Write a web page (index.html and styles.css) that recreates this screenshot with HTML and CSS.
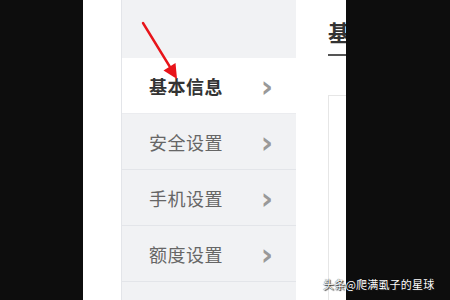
FILE: index.html
```html
<!DOCTYPE html>
<html lang="zh">
<head>
<meta charset="utf-8">
<link rel="stylesheet" href="styles.css">
</head>
<body>
<div class="stage">
  <div class="side-black"></div>
  <div class="panel">
    <nav class="sidebar">
      <div class="sidebar-top"></div>
      <div class="item active"><span class="label">基本信息</span><span class="chev">&#x203A;</span></div>
      <div class="item"><span class="label">安全设置</span><span class="chev">&#x203A;</span></div>
      <div class="item"><span class="label">手机设置</span><span class="chev">&#x203A;</span></div>
      <div class="item"><span class="label">额度设置</span><span class="chev">&#x203A;</span></div>
      <div class="item"></div>
    </nav>
    <main class="content">
      <h1 class="title">基本信息</h1>
      <div class="box"></div>
    </main>
  </div>
  <div class="right-black"></div>
  <svg class="arrow" width="60" height="80" viewBox="0 0 60 80">
    <line x1="3" y1="2" x2="30" y2="46" stroke="#e8141a" stroke-width="2.4" stroke-linecap="round"/>
    <polygon points="37,58 35.5,42 23.5,49.5" fill="#e8141a"/>
  </svg>
  <div class="watermark">头条@爬满虱子的星球</div>
</div>
</body>
</html>
```
FILE: styles.css
```css
html, body {
  margin: 0;
  padding: 0;
  background: #0d0d0d;
}
.stage {
  position: relative;
  width: 450px;
  height: 300px;
  display: flex;
  overflow: hidden;
  font-family: "Noto Sans CJK SC", "Noto Sans", sans-serif;
}
.side-black {
  width: 83px;
  flex: none;
  background: #0d0d0d;
}
.panel {
  width: 263px;
  flex: none;
  background: #fff;
  display: flex;
  padding-left: 38px;
  box-sizing: border-box;
  gap: 32px;
  overflow: hidden;
}
.right-black {
  flex: 1;
  background: #0d0d0d;
}
.sidebar {
  width: 175px;
  flex: none;
  background: #f1f2f4;
  border-left: 1px solid #e3e5e9;
  box-sizing: border-box;
  display: flex;
  flex-direction: column;
}
.sidebar-top {
  height: 58px;
  flex: none;
}
.item {
  height: 56px;
  flex: none;
  box-sizing: border-box;
  border-bottom: 1px solid #e3e5e9;
  display: flex;
  align-items: center;
  padding-left: 27px;
  padding-right: 23px;
  color: #666;
  font-size: 18px;
}
.item.active {
  background: #fff;
  color: #333;
  font-weight: bold;
  border-bottom: 1px solid #ebecef;
}
.label {
  flex: 1;
  letter-spacing: 0.5px;
}
.chev {
  flex: none;
  color: #999;
  font-family: "DejaVu Sans", sans-serif;
  font-size: 30px;
  font-weight: bold;
  line-height: 20px;
  height: 20px;
  margin-top: 2px;
}
.content {
  flex: none;
  width: 300px;
  display: flex;
  flex-direction: column;
}
.title {
  margin: 15px 0 0 0;
  font-size: 22px;
  font-weight: bold;
  color: #333;
  line-height: 32px;
  height: 39px;
  border-bottom: 2px solid #555;
  width: 100px;
  white-space: nowrap;
}
.box {
  margin-top: 39px;
  flex: 1;
  border-top: 1px solid #e6e6e6;
  border-left: 1px solid #e6e6e6;
}
.arrow {
  position: absolute;
  left: 140px;
  top: 21px;
}
.watermark {
  position: absolute;
  left: 323px;
  top: 276px;
  font-size: 11px;
  letter-spacing: 0.2px;
  color: #fff;
  text-shadow: 0 0 1px #000, 1px 1px 1px #222;
  white-space: nowrap;
}
```
